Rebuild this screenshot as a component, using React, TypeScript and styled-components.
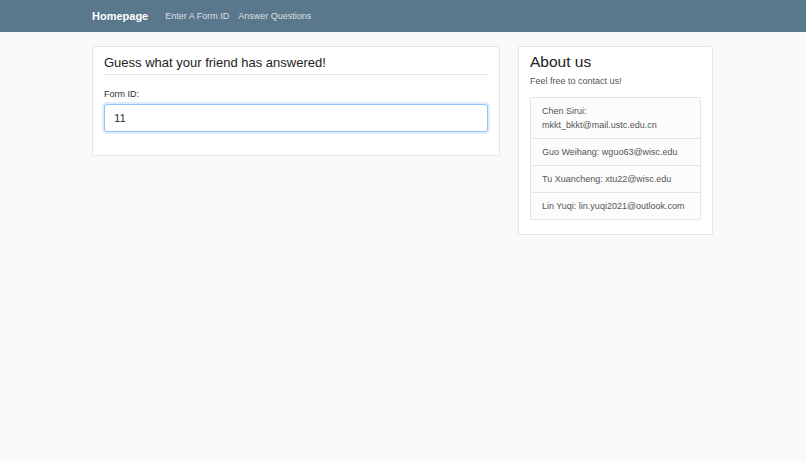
import styled, { createGlobalStyle } from 'styled-components';

const GlobalStyle = createGlobalStyle`
  html, body {
    margin: 0;
    padding: 0;
    background: #f8f9fa;
    font-family: "Liberation Sans", Arial, sans-serif;
    color: #212529;
  }
  * { box-sizing: border-box; }
`;

const members = [
  'Chen Sirui: mkkt_bkkt@mail.ustc.edu.cn',
  'Guo Weihang: wguo63@wisc.edu',
  'Tu Xuancheng: xtu22@wisc.edu',
  'Lin Yuqi: lin.yuqi2021@outlook.com',
];

const App = () => {
  return (
    <Page>
      <GlobalStyle />
      <Navbar>
        <Inner>
          <Brand>Homepage</Brand>
          <NavLinks>
            <NavLink>Enter A Form ID</NavLink>
            <NavLink>Answer Questions</NavLink>
          </NavLinks>
        </Inner>
      </Navbar>
      <Main>
        <Card $width={408}>
          <Title>Guess what your friend has answered!</Title>
          <Label htmlFor="formid">Form ID:</Label>
          <Input id="formid" defaultValue="11" />
        </Card>
        <Card $width={195} $pad="6px 11px 14px">
          <AboutTitle>About us</AboutTitle>
          <Lead>Feel free to contact us!</Lead>
          <ListGroup>
            {members.map((m) => (
              <ListItem key={m}>{m}</ListItem>
            ))}
          </ListGroup>
        </Card>
      </Main>
    </Page>
  );
};

const Page = styled.div`
  min-height: 461px;
`;

const Navbar = styled.nav`
  background: #5a788c;
  height: 32px;
`;

const Inner = styled.div`
  width: 622px;
  margin: 0 auto;
  height: 100%;
  display: flex;
  align-items: center;
`;

const Brand = styled.a`
  color: #fff;
  font-size: 11px;
  font-weight: 700;
  margin-right: 17px;
`;

const NavLinks = styled.div`
  display: flex;
  gap: 9px;
`;

const NavLink = styled.a`
  color: rgba(255, 255, 255, 0.78);
  font-size: 9px;
`;

const Main = styled.main`
  width: 622px;
  margin: 14px auto 0;
  display: flex;
  align-items: flex-start;
  gap: 18px;
`;

const Card = styled.section<{ $width: number; $pad?: string }>`
  width: ${(p) => p.$width}px;
  background: #fff;
  border: 1px solid #e3e5e8;
  border-radius: 2px;
  padding: ${(p) => p.$pad || '7px 11px 23px'};
`;

const Title = styled.h2`
  margin: 0 0 14px;
  font-size: 13px;
  line-height: 17px;
  font-weight: 400;
  color: #222;
  padding-bottom: 3px;
  border-bottom: 1px solid #e4e6e8;
`;

const Label = styled.label`
  display: block;
  font-size: 9px;
  color: #333;
  margin-bottom: 5px;
`;

const Input = styled.input`
  width: 100%;
  height: 28px;
  border: 1px solid #90c2f5;
  border-radius: 3px;
  box-shadow: 0 0 0 2px rgba(100, 160, 240, 0.2);
  padding: 0 9px;
  font-family: inherit;
  font-size: 11.5px;
  color: #333;
  outline: none;
`;

const AboutTitle = styled.h2`
  margin: 0 0 5px;
  font-size: 15.5px;
  line-height: 18px;
  font-weight: 500;
  color: #222;
`;

const Lead = styled.p`
  margin: 0 0 10px;
  font-size: 9px;
  line-height: 11px;
  color: #555;
`;

const ListGroup = styled.ul`
  list-style: none;
  margin: 0;
  padding: 0;
  border: 1px solid #e3e5e8;
  border-radius: 2px;
`;

const ListItem = styled.li`
  font-size: 9px;
  line-height: 14px;
  color: #555;
  padding: 6px 11px;
  background: #fcfcfc;
  & + & {
    border-top: 1px solid #e3e5e8;
  }
`;

export default App;
